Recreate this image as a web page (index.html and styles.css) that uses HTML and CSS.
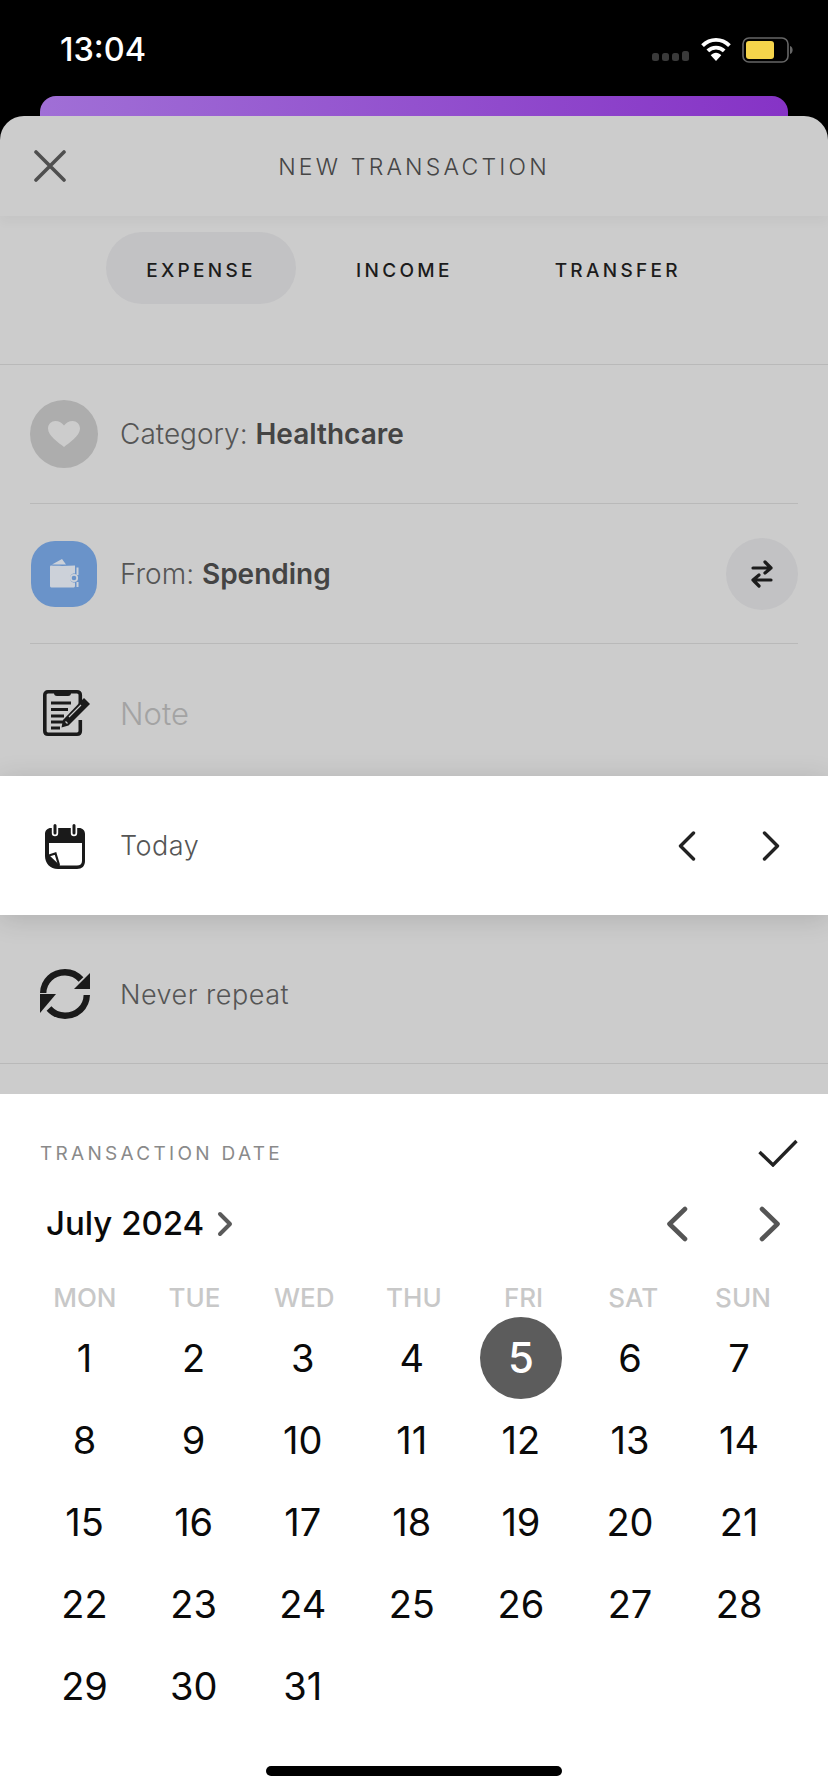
FILE: index.html
```html
<html>
  <head>
    <link rel="stylesheet" href="styles.css">
  </head>
  <body>
    <div id="status">
      <span id="clock">13:04</span>
      <div id="status-icons">
        <svg class="signal" width="38" height="10" viewBox="0 0 38 10"><g fill="#3a3a3a"><rect x="0" y="2" width="7" height="8" rx="2.5"/><rect x="10" y="2" width="7" height="8" rx="2.5"/><rect x="20" y="2" width="7" height="8" rx="2.5"/><rect x="30" y="0" width="7" height="10" rx="2.5"/></g></svg>
        <svg class="wifi" width="32" height="24" viewBox="0 0 32 25"><g fill="none" stroke="#fff" stroke-width="4"><path d="M2 9 C10 1 22 1 30 9"/><path d="M7.5 14.5 C12 10 20 10 24.5 14.5"/></g><path d="M10.5 19 C13.5 15.5 18.5 15.5 21.5 19 L16 25 Z" fill="#fff"/></svg>
        <svg class="battery" width="54" height="26" viewBox="0 0 54 26"><rect x="1" y="1" width="45" height="24" rx="6" fill="none" stroke="#666" stroke-width="1.6"/><rect x="4" y="4" width="28" height="18" rx="3" fill="#f5d44b"/><path d="M48 9 C51.5 10 51.5 16 48 17 Z" fill="#666"/></svg>
      </div>
    </div>
    <div id="behind"></div>

    <div id="sheet">
      <div id="sheet-header">
        <svg class="close" width="32" height="32" viewBox="0 0 32 32"><path d="M2 2 L30 30 M30 2 L2 30" stroke="#4f4f4f" stroke-width="3.6" stroke-linecap="round"/></svg>
        <span class="sheet-title">NEW TRANSACTION</span>
      </div>
      <div id="tabs">
        <span class="tab active">EXPENSE</span>
        <span class="tab income">INCOME</span>
        <span class="tab transfer">TRANSFER</span>
      </div>

      <div class="row first">
        <div class="row-icon">
          <div class="cat-icon">
            <svg width="32" height="26" viewBox="0 0 32 26"><path d="M16 26 C11 22 0 15 0 7.5 C0 3 3.5 0 7.5 0 C11 0 14 2 16 4.5 C18 2 21 0 24.5 0 C28.500 0 32 3 32 7.500 C32 15 21 22 16 26 Z" fill="#cccccc"/></svg>
          </div>
        </div>
        <span class="row-text">Category: <b>Healthcare</b></span>
      </div>
      <div class="row from">
        <div class="row-icon">
          <div class="wallet-icon">
            <svg width="30" height="29" viewBox="0 0 30 29"><g fill="#ccd1d9"><path d="M2 6.500 C8 7 18 7 26 6.500 V14.500 H24.500 C20 14.500 20 23.500 24.500 23.500 H26 V27 C26 28 25 28.500 24 28.500 H3 C2 28.500 1 28 1 27 V8 C1 7 1.500 6.500 2 6.500 Z"/><path d="M3 5.500 L13 0 L17 5.500 Z"/><path d="M27.500 8.500 H29.500 V16 H27.500 Z"/><path d="M27.500 23 H29.500 V28 H27.500 Z"/></g><circle cx="25" cy="19" r="3.200" fill="#6a93c9" stroke="#ccd1d9" stroke-width="1.800"/></svg>
          </div>
        </div>
        <span class="row-text">From: <b>Spending</b></span>
        <div class="swap">
          <svg width="24" height="28" viewBox="0 0 24 28"><g fill="none" stroke="#1c1c1c" stroke-width="3.200" stroke-linecap="round" stroke-linejoin="round"><path d="M3 8 H21 M15 2 L21 8 L15 13"/><path d="M21 20 H3 M9 15 L3 20 L9 26"/></g></svg>
        </div>
      </div>
      <div class="row note">
        <div class="row-icon">
          <svg width="48" height="48" viewBox="0 0 48 48"><path d="M38.300 17 V6 C38.300 4 37 2.800 35 2.800 H6 C4 2.800 2.800 4 2.800 6 V42 C2.800 44 4 45.200 6 45.200 H35 C37 45.200 38.300 44 38.300 42 V31" fill="none" stroke="#1a1a1a" stroke-width="3.600"/><path d="M12 2 H29 V4 C29 6 28 7 26 7 H15 C13 7 12 6 12 4 Z" fill="#1a1a1a"/><path d="M9 14 H29 M9 20.500 H26 M9 27 H22 M9 33 H21 M9 39 H18" stroke="#1a1a1a" stroke-width="2.800"/><path d="M42 9 L48 15 L26.500 36.500 L19.500 38.500 L21 31 Z" fill="#1a1a1a"/><path d="M23.500 32.500 L25.500 34.500 M39 16 L27 28" stroke="#cccccc" stroke-width="1.200"/></svg>
        </div>
        <span class="row-text placeholder">Note</span>
      </div>
      <div class="row date">
        <div class="row-icon">
          <svg width="42" height="46" viewBox="0 0 42 46"><path d="M7 5 H35 C38.500 5 41 7.500 41 11 V38 C41 43 38 46 33 46 H14 C6 46 1 40 1 33 V11 C1 7.500 3.500 5 7 5 Z M5 20 V32 L16 42.500 H33 C36 42.500 38 41 38 38 V20 Z" fill="#1a1a1a" fill-rule="evenodd"/><path d="M5 32.500 L11.500 30.500 L15 42" fill="none" stroke="#1a1a1a" stroke-width="2.200"/><g stroke-linecap="round"><path d="M11 3 V10 M30 3 V10" stroke="#fff" stroke-width="6.400"/><path d="M11 2.500 V10 M30 2.500 V10" stroke="#1a1a1a" stroke-width="3"/></g></svg>
        </div>
        <span class="row-text light">Today</span>
        <div class="date-arrows">
          <svg width="18" height="30" viewBox="0 0 18 30"><path d="M15.500 2 L2.500 15 L15.500 28" fill="none" stroke="#222" stroke-width="3.400" stroke-linecap="round" stroke-linejoin="round"/></svg>
          <svg width="18" height="30" viewBox="0 0 18 30"><path d="M2.500 2 L15.500 15 L2.500 28" fill="none" stroke="#222" stroke-width="3.400" stroke-linecap="round" stroke-linejoin="round"/></svg>
        </div>
      </div>
      <div class="row repeat">
        <div class="row-icon">
          <svg width="50" height="50" viewBox="0 0 50 50"><g fill="none" stroke="#1a1a1a" stroke-width="6.400"><path d="M3.200 24 C3.500 12 13 3.200 25 3.200 C31.500 3.200 37 6 41 10.500"/><path d="M46.800 26 C46.500 38 37 46.800 25 46.800 C18.500 46.800 13 44 9 39.500"/></g><path d="M50 4 V20 H34 Z" fill="#1a1a1a"/><path d="M0 25 H16 L0 44 Z" fill="#1a1a1a"/></svg>
        </div>
        <span class="row-text light">Never repeat</span>
      </div>
    </div>

    <div id="picker">
      <div class="picker-top">
        <span class="picker-label">TRANSACTION DATE</span>
        <svg width="40" height="28" viewBox="0 0 40 28"><path d="M1.500 13 L15 26 L38.500 2" fill="none" stroke="#222" stroke-width="3.400"/></svg>
      </div>
      <div class="month-row">
        <span class="month">July 2024</span>
        <svg class="month-more" width="16" height="26" viewBox="0 0 16 26"><path d="M3 3 L13 13 L3 23" fill="none" stroke="#5a5a5a" stroke-width="4" stroke-linecap="round" stroke-linejoin="round"/></svg>
        <div class="month-arrows">
          <svg width="22" height="36" viewBox="0 0 22 36"><path d="M19 3 L3.500 18 L19 33" fill="none" stroke="#555" stroke-width="4.600" stroke-linecap="round" stroke-linejoin="round"/></svg>
          <svg width="22" height="36" viewBox="0 0 22 36"><path d="M3 3 L18.500 18 L3 33" fill="none" stroke="#555" stroke-width="4.600" stroke-linecap="round" stroke-linejoin="round"/></svg>
        </div>
      </div>
      <div class="weekdays">
        <span>MON</span><span>TUE</span><span>WED</span><span>THU</span><span>FRI</span><span>SAT</span><span>SUN</span>
      </div>
      <div class="days">
        <span>1</span><span>2</span><span>3</span><span>4</span><span class="selected"><i>5</i></span><span>6</span><span>7</span>
        <span>8</span><span>9</span><span>10</span><span>11</span><span>12</span><span>13</span><span>14</span>
        <span>15</span><span>16</span><span>17</span><span>18</span><span>19</span><span>20</span><span>21</span>
        <span>22</span><span>23</span><span>24</span><span>25</span><span>26</span><span>27</span><span>28</span>
        <span>29</span><span>30</span><span>31</span>
      </div>
      <div class="home-bar"></div>
    </div>
  </body>
</html>
```

FILE: styles.css
```css
html, body {
  margin: 0;
  background: #000;
}
body {
  width: 828px;
  height: 1792px;
  overflow: hidden;
  font-family: Inter, "Noto Sans", sans-serif;
}
#status {
  height: 96px;
  display: flex;
  justify-content: space-between;
  align-items: flex-start;
  padding: 0 32px 0 60px;
  box-sizing: border-box;
}
#clock {
  color: #fff;
  font-size: 32.5px;
  font-weight: 500;
  line-height: 36px;
  margin-top: 32px;
}
#status-icons {
  display: flex;
  align-items: flex-start;
  margin-top: 37px;
}
.signal {
  margin-top: 14px;
  margin-right: 10px;
}
.wifi {
  margin-right: 10px;
}
#behind {
  height: 20px;
  margin: 0 40px;
  border-radius: 16px 16px 0 0;
  background: linear-gradient(90deg, #a06fd6, #8633c6);
}
#sheet {
  height: 978px;
  background: #ccc;
  border-radius: 24px 24px 0 0;
  overflow: hidden;
}
#sheet-header {
  height: 100px;
  display: flex;
  align-items: center;
  justify-content: center;
  position: relative;
  box-shadow: 0 6px 10px rgba(0, 0, 0, 0.035);
}
.close {
  position: absolute;
  left: 34px;
  top: 34px;
}
.sheet-title {
  color: #454545;
  font-size: 23px;
  font-weight: 300;
  letter-spacing: 3.2px;
  margin-top: 2px;
}
#tabs {
  height: 149px;
  box-sizing: border-box;
  padding: 16px 0 0 106px;
  display: flex;
  align-items: flex-start;
  border-bottom: 1px solid #b9b9b9;
}
.tab {
  height: 72px;
  box-sizing: border-box;
  padding-top: 6px;
  line-height: 66px;
  font-size: 19px;
  font-weight: 500;
  letter-spacing: 3.3px;
  color: #1c1c1c;
}
.tab.active {
  width: 190px;
  text-align: center;
  background: #c2c2c4;
  border-radius: 36px;
}
.income {
  margin-left: 60px;
}
.transfer {
  margin-left: 102px;
}
.row {
  height: 139px;
  margin: 0 30px;
  display: flex;
  align-items: center;
  border-bottom: 1px solid #b9b9b9;
  box-sizing: border-box;
}
.row.from {
  height: 140px;
}
.row-icon {
  width: 68px;
  margin-right: 22px;
  display: flex;
  justify-content: center;
  align-items: center;
}
.row-text {
  color: #555;
  font-size: 28px;
  font-weight: 300;
  flex: 1;
}
.row-text b {
  color: #444;
  font-weight: 600;
}
.row-text.placeholder {
  color: #a3a3a3;
  font-size: 31px;
}
.row-text.light {
  font-size: 27px;
  letter-spacing: 0.5px;
}
.cat-icon {
  width: 68px;
  height: 68px;
  border-radius: 50%;
  background: #adadad;
  display: flex;
  align-items: center;
  justify-content: center;
}
.wallet-icon {
  width: 66px;
  height: 66px;
  border-radius: 24px;
  background: #6a93c9;
  display: flex;
  align-items: center;
  justify-content: center;
}
.swap {
  width: 72px;
  height: 72px;
  border-radius: 50%;
  background: #c2c2c4;
  display: flex;
  align-items: center;
  justify-content: center;
}
.row.note {
  height: 132px;
  padding-top: 6px;
  border-bottom: none;
}
.row.note svg {
  margin-left: 4px;
}
.row.date {
  height: 139px;
  margin: 0;
  padding-left: 30px;
  background: #fff;
  border-bottom: none;
  position: relative;
  box-shadow: 0 4px 26px rgba(0, 0, 0, 0.14);
}
.row.date svg, .row.repeat svg {
  margin-left: 2px;
}
.date-arrows {
  display: flex;
  gap: 64px;
  margin-right: 48px;
}
.date-arrows svg {
  margin-left: 0;
}
.row.repeat {
  margin: 0;
  padding: 10px 0 0 30px;
  height: 149px;
}
#picker {
  height: 698px;
  background: #fff;
  padding-top: 44px;
  box-sizing: border-box;
}
.picker-top {
  height: 30px;
  display: flex;
  justify-content: space-between;
  align-items: center;
  padding: 0 30px 0 40px;
}
.picker-label {
  color: #8a8a8a;
  font-size: 19px;
  font-weight: 400;
  letter-spacing: 3.3px;
}
.month-row {
  height: 40px;
  margin-top: 36px;
  padding-left: 46px;
  display: flex;
  align-items: center;
}
.month {
  color: #0a0a0a;
  font-size: 33px;
  font-weight: 500;
  margin-bottom: 2px;
}
.month-more {
  margin-left: 13px;
}
.month-arrows {
  margin-left: auto;
  margin-right: 47px;
  display: flex;
  gap: 71px;
}
.weekdays {
  height: 30px;
  margin-top: 38px;
  padding-left: 30px;
  display: grid;
  grid-template-columns: repeat(7, 109.7px);
  align-items: center;
  text-align: center;
  color: #c8c8c8;
  font-size: 26px;
  font-weight: 500;
}
.days {
  margin-top: 5px;
  padding-left: 30px;
  display: grid;
  grid-template-columns: repeat(7, 109.1px);
  grid-auto-rows: 82px;
  height: 410px;
  text-align: center;
  color: #0a0a0a;
  font-size: 38px;
  line-height: 82px;
}
.selected i {
  display: block;
  width: 82px;
  height: 82px;
  margin: 0 auto;
  border-radius: 50%;
  background: #5c5c5c;
  color: #fff;
  font-size: 42px;
  font-style: normal;
  font-weight: 500;
  line-height: 82px;
}
.home-bar {
  width: 296px;
  height: 10px;
  margin: 39px auto 0;
  border-radius: 5px;
  background: #000;
}
```
